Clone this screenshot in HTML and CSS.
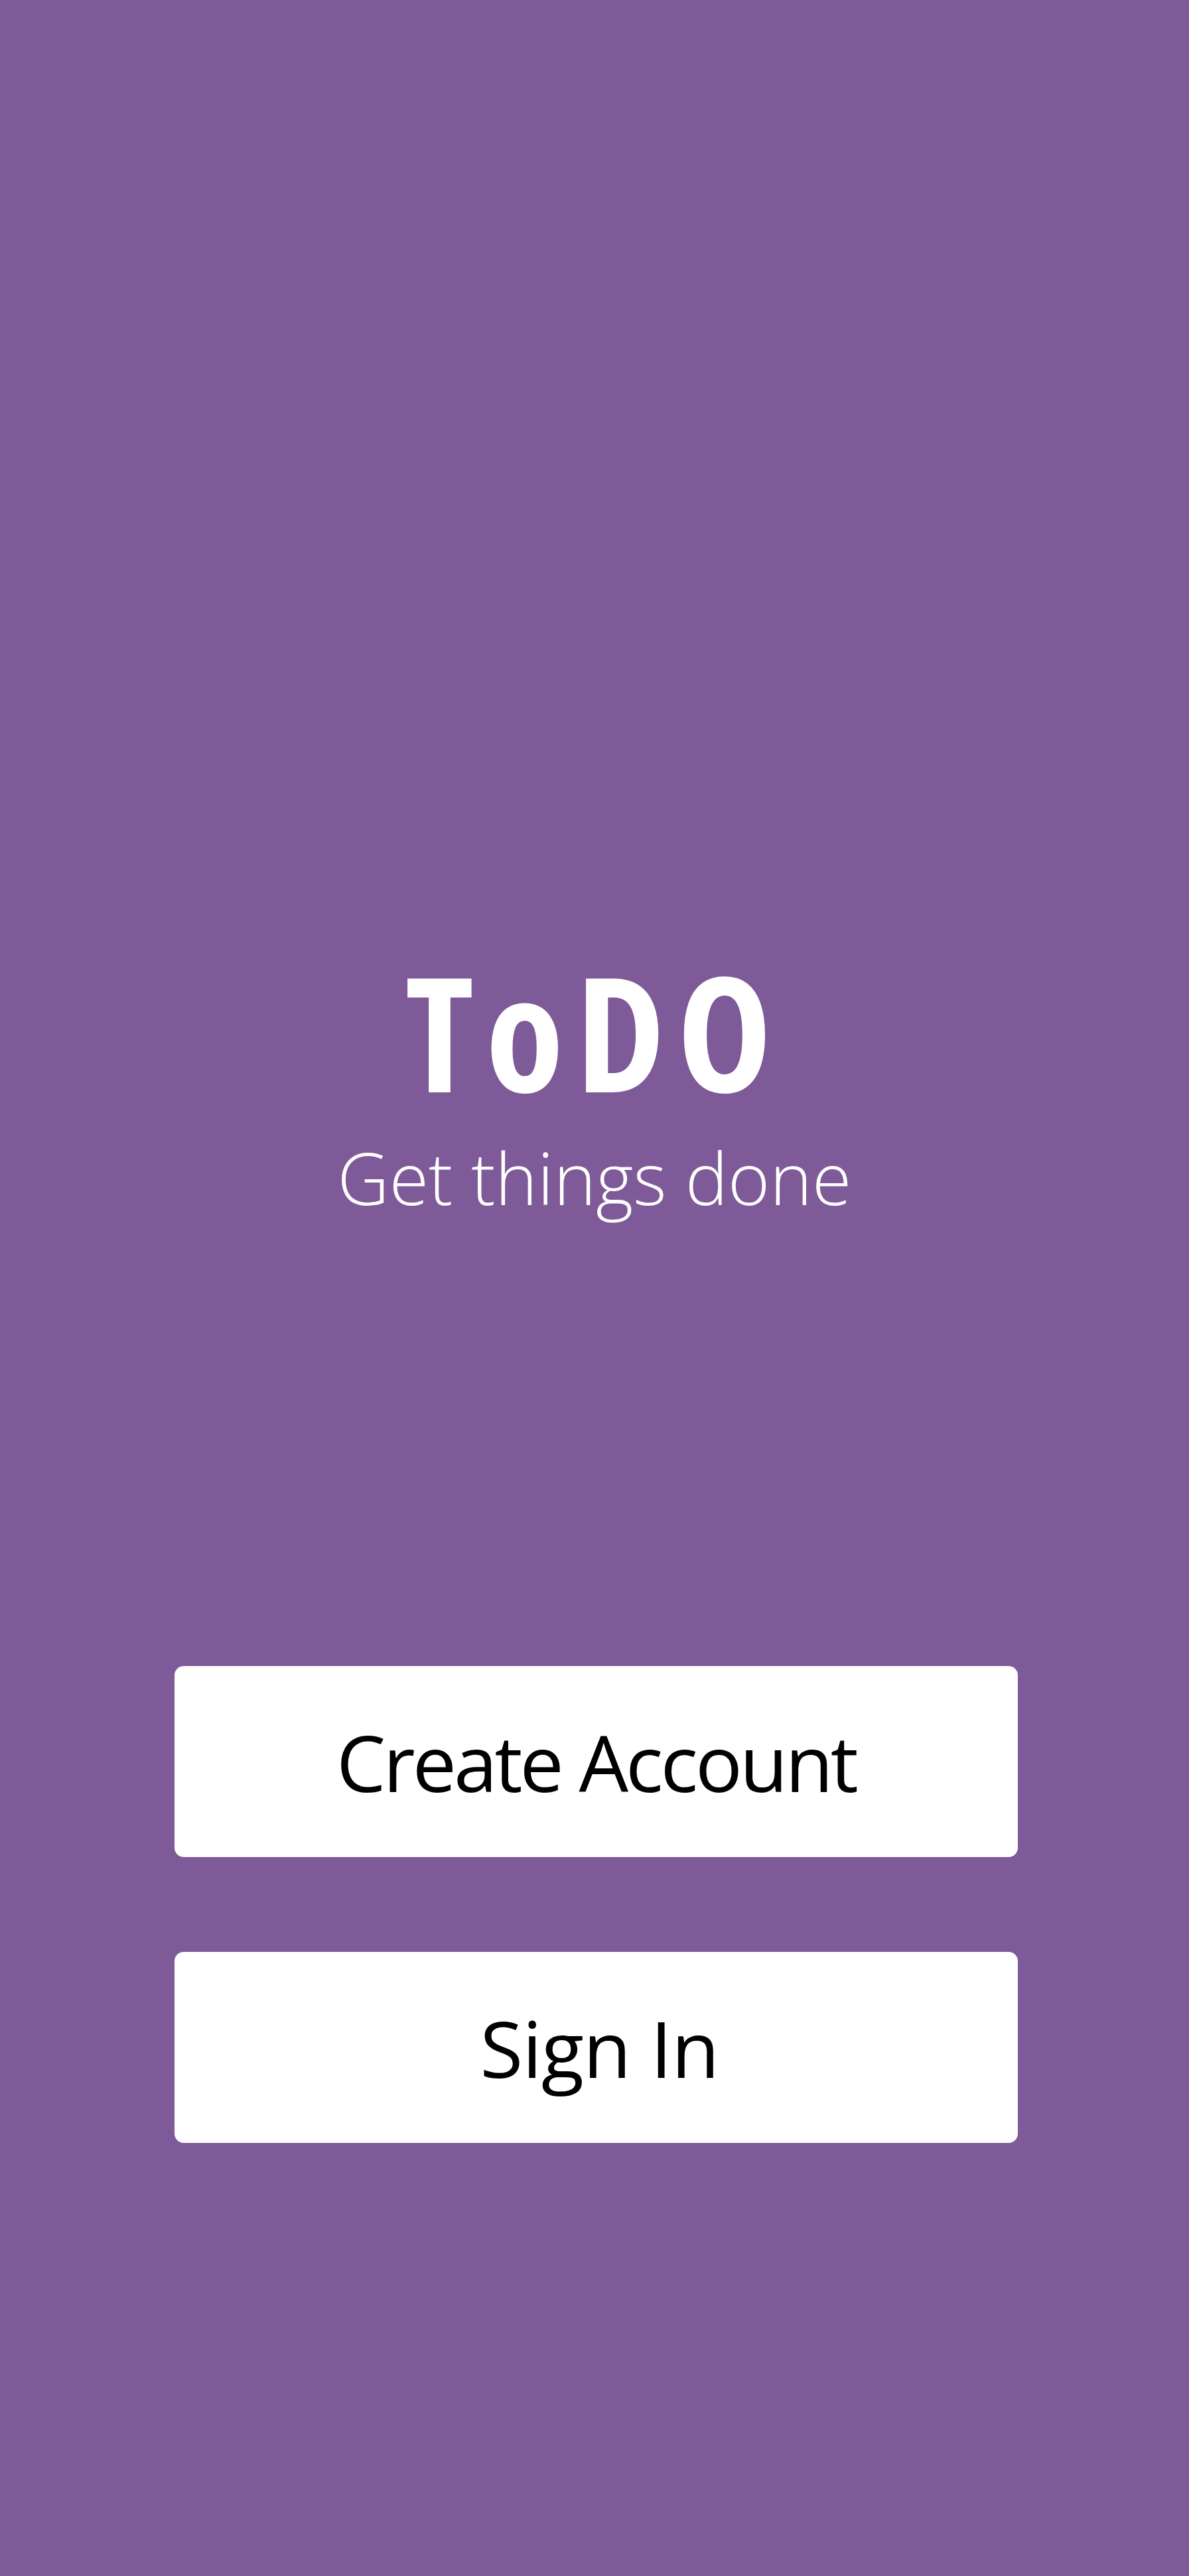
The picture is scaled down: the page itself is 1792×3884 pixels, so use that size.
FILE: index.html
```html
<!DOCTYPE html>
<html>
<head>
<meta charset="utf-8">
<link rel="stylesheet" href="styles.css">
</head>
<body>
<main class="screen">
  <section class="brand">
    <h1 class="title">ToDO</h1>
    <p class="tagline">Get things done</p>
  </section>
  <section class="actions">
    <button class="btn btn-create">Create Account</button>
    <button class="btn btn-signin">Sign In</button>
  </section>
</main>
</body>
</html>
```
FILE: styles.css
```css
html, body {
  margin: 0;
  padding: 0;
}
body {
  background: #7f5a99;
  font-family: "Open Sans", "DejaVu Sans Condensed", sans-serif;
}
.screen {
  height: 3884px;
  display: flex;
  flex-direction: column;
  align-items: center;
  padding-top: 1433px;
  box-sizing: border-box;
}
.brand {
  display: flex;
  flex-direction: column;
  align-items: center;
}
.title {
  margin: 0;
  color: #fff;
  font-size: 241px;
  font-weight: 700;
  font-stretch: 75%;
  letter-spacing: 18px;
  line-height: 1;
}
.tagline {
  margin: 48px 0 0;
  color: #fff;
  font-size: 108px;
  font-weight: 300;
  font-stretch: 100%;
  letter-spacing: 0;
  line-height: 1;
}
.actions {
  margin-top: 682px;
  display: flex;
  flex-direction: column;
  gap: 143px;
  width: 1271px;
  margin-left: 5px;
}
.btn {
  height: 288px;
  border: 0;
  border-radius: 14px;
  background: #fff;
  color: #000;
  font-family: inherit;
  font-stretch: 100%;
  font-size: 118px;
  font-weight: 400;
  padding: 0;
}
.btn-create {
  letter-spacing: -4px;
}
.btn-signin {
  letter-spacing: -1px;
  padding-left: 10px;
}
```
